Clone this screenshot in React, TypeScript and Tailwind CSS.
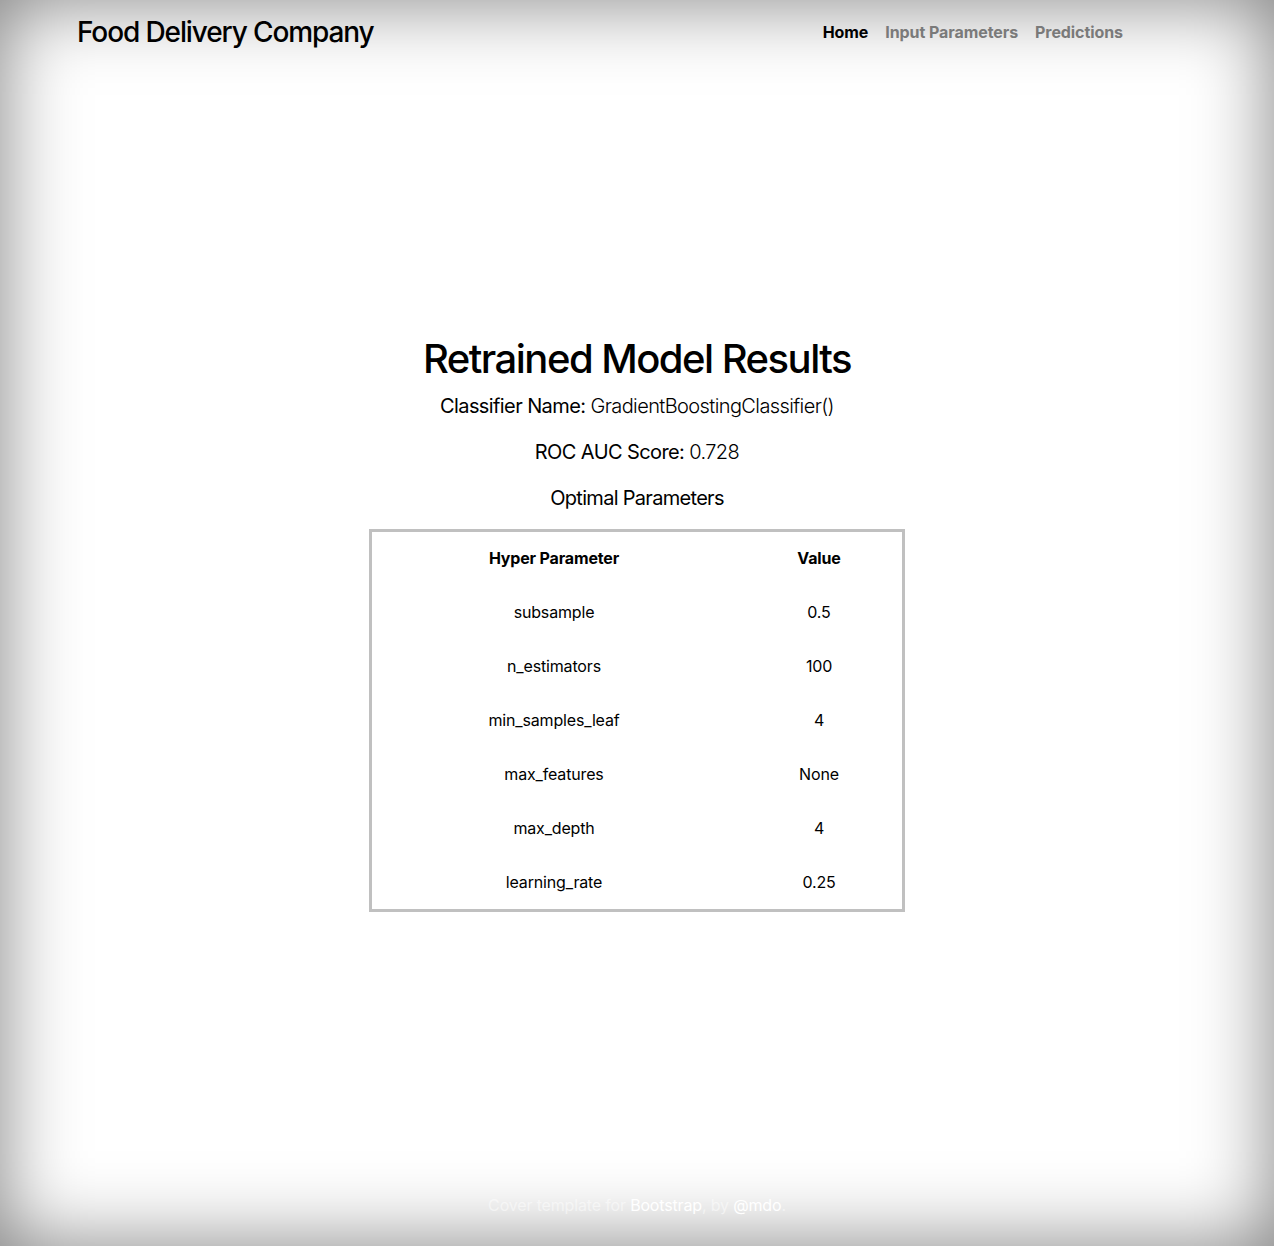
import React from 'react'

const params: [string, string][] = [
  ['subsample', '0.5'],
  ['n_estimators', '100'],
  ['min_samples_leaf', '4'],
  ['max_features', 'None'],
  ['max_depth', '4'],
  ['learning_rate', '0.25'],
]

export default function App() {
  return (
    <div className="h-[1246px] w-full bg-white text-black shadow-[inset_0_0_5rem_rgba(0,0,0,0.5)] flex flex-col font-['Inter','Liberation_Sans',sans-serif]">
      <header className="flex items-start justify-between pt-4 pl-[77px] pr-[151px]">
        <h3 className="text-[28px] leading-[1.2] font-medium tracking-[-0.04em]">Food Delivery Company</h3>
        <nav className="flex gap-[17px] text-base font-bold leading-6 tracking-[-0.005em]">
          <a className="py-1 text-black">Home</a>
          <a className="py-1 text-[#7a7a7a]">Input Parameters</a>
          <a className="py-1 text-[#7a7a7a]">Predictions</a>
        </nav>
      </header>

      <main className="flex-1 flex flex-col items-center pt-[285px]">
        <h1 className="text-[40px] leading-[1.2] font-medium tracking-[-0.038em] mb-2">Retrained Model Results</h1>
        <p className="text-xl leading-[1.5] mb-4 font-normal tracking-[-0.03em]">
          Classifier Name: <span className="font-light">GradientBoostingClassifier()</span>
        </p>
        <p className="text-xl leading-[1.5] mb-4 font-normal tracking-[-0.03em]">
          ROC AUC Score: <span className="font-light">0.728</span>
        </p>
        <p className="text-xl leading-[1.5] mb-4 font-normal tracking-[-0.035em]">Optimal Parameters</p>
        <table className="w-[536px] border-separate border-spacing-0 border-[3px] border-[#c0c0c0] border-solid text-base tracking-[-0.01em]">
          <thead>
            <tr className="h-[53px]">
              <th className="w-[364px] font-bold text-center">Hyper Parameter</th>
              <th className="font-bold text-center">Value</th>
            </tr>
          </thead>
          <tbody>
            {params.map(([k, v]) => (
              <tr key={k} className="h-[54px]">
                <td className="text-center">{k}</td>
                <td className="text-center">{v}</td>
              </tr>
            ))}
          </tbody>
        </table>
      </main>

      <footer className="text-center text-base pb-[29px] text-white/50 tracking-[-0.01em]">
        Cover template for <a className="text-white">Bootstrap</a>, by <a className="text-white">@mdo</a>.
      </footer>
    </div>
  )
}
